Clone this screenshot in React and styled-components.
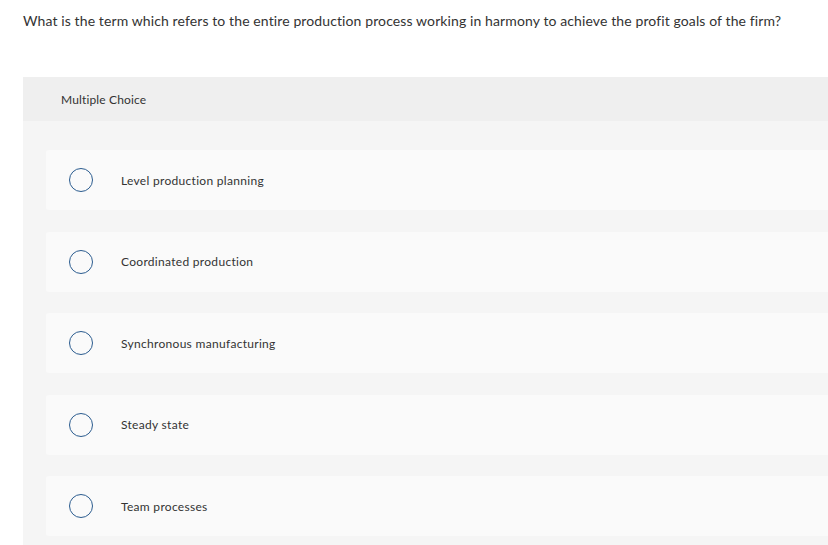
import React from 'react'
import styled, { createGlobalStyle } from 'styled-components'

const GlobalStyle = createGlobalStyle`
  body {
    margin: 0;
    background: #fff;
    font-family: Lato, "Liberation Sans", sans-serif;
    overflow: hidden;
  }
`

const choices = [
  'Level production planning',
  'Coordinated production',
  'Synchronous manufacturing',
  'Steady state',
  'Team processes',
]

const App = () => {
  return (
    <Page>
      <GlobalStyle />
      <Question>
        What is the term which refers to the entire production process working in harmony to achieve the profit goals of the firm?
      </Question>
      <Panel>
        <PanelHeader>Multiple Choice</PanelHeader>
        <ChoiceList>
          {choices.map((c) => (
            <Choice key={c}>
              <Radio />
              <ChoiceText>{c}</ChoiceText>
            </Choice>
          ))}
        </ChoiceList>
      </Panel>
    </Page>
  )
}

export default App

const Page = styled.div`
  width: 828px;
  height: 545px;
  padding-left: 23px;
  box-sizing: border-box;
  overflow: hidden;
`
const Question = styled.div`
  padding-top: 11px;
  font-size: 14px;
  letter-spacing: 0.11px;
  line-height: 20px;
  color: #333;
  white-space: nowrap;
`
const Panel = styled.div`
  margin-top: 46px;
  width: 830px;
`
const PanelHeader = styled.div`
  height: 44px;
  background: #efefef;
  padding-left: 38px;
  display: flex;
  align-items: center;
  font-size: 12px;
  letter-spacing: 0.15px;
  color: #333;
`
const ChoiceList = styled.div`
  background: #f5f5f5;
  padding: 29px 0 30px 23px;
  display: flex;
  flex-direction: column;
  gap: 21.5px;
`
const Choice = styled.div`
  height: 60px;
  background: #fafafa;
  border-radius: 3px 0 0 3px;
  display: flex;
  align-items: center;
  padding-left: 23px;
`
const Radio = styled.span`
  width: 24px;
  height: 24px;
  border: 1.5px solid #2b5c8f;
  border-radius: 50%;
  box-sizing: border-box;
  flex-shrink: 0;
`
const ChoiceText = styled.span`
  margin-left: 28px;
  font-size: 12px;
  letter-spacing: 0.3px;
  color: #333;
`
